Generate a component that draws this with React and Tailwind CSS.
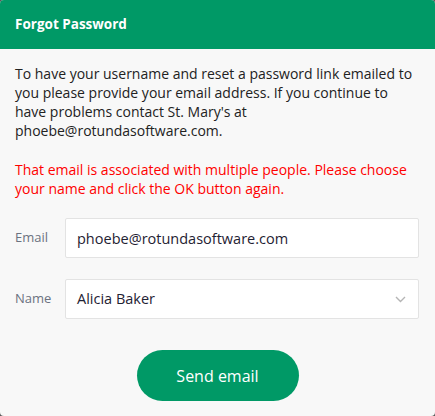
const ForgotPassword = () => {
  return (
    <div className="w-[435px] h-[416px] bg-[#5a5a5a]" style={{ fontFamily: '"Open Sans", sans-serif' }}>
      <div className="h-full rounded-[4px] overflow-hidden bg-[#f8f8f8] flex flex-col">
        <div className="h-[49px] bg-[#009966] flex items-center px-[15px]">
          <h1 className="text-white text-[13.5px] font-bold">Forgot Password</h1>
        </div>

        <div className="px-[15px] pt-[15px]">
          <p className="text-[14px] leading-[19px] text-[#222]">
            To have your username and reset a password link emailed to you please provide your
            email address. If you continue to have problems contact St. Mary's at
            phoebe@rotundasoftware.com.
          </p>
          <p className="mt-[20px] text-[14px] leading-[19px] text-[#ff0000]">
            That email is associated with multiple people. Please choose your name and click the
            OK button again.
          </p>

          <div className="mt-[20px] flex flex-col gap-[21px]">
            <div className="flex items-center">
              <label className="w-[50px] text-[13px] text-[#6b7280]">Email</label>
              <input
                readOnly
                value="phoebe@rotundasoftware.com"
                className="w-[354px] h-[40px] bg-white border border-[#e3e3e3] rounded-[2px] px-[11px] text-[14.5px] font-medium text-[#1f2233] outline-none"
              />
            </div>
            <div className="flex items-center">
              <label className="w-[50px] text-[13px] text-[#6b7280]">Name</label>
              <div className="w-[354px] h-[40px] bg-white border border-[#e3e3e3] rounded-[2px] pl-[11px] pr-[12px] flex items-center justify-between">
                <span className="text-[14.5px] font-medium text-[#1f2233]">Alicia Baker</span>
                <svg width="11" height="7" viewBox="0 0 11 7" fill="none">
                  <path d="M1 1l4.5 4.5L10 1" stroke="#b5b5b5" strokeWidth="1.4" />
                </svg>
              </div>
            </div>
          </div>

          <div className="mt-[31px] flex justify-center">
            <button className="w-[162px] h-[51px] rounded-full bg-[#009966] text-white text-[16px]">
              Send email
            </button>
          </div>
        </div>
      </div>
    </div>
  );
};

export default ForgotPassword;
